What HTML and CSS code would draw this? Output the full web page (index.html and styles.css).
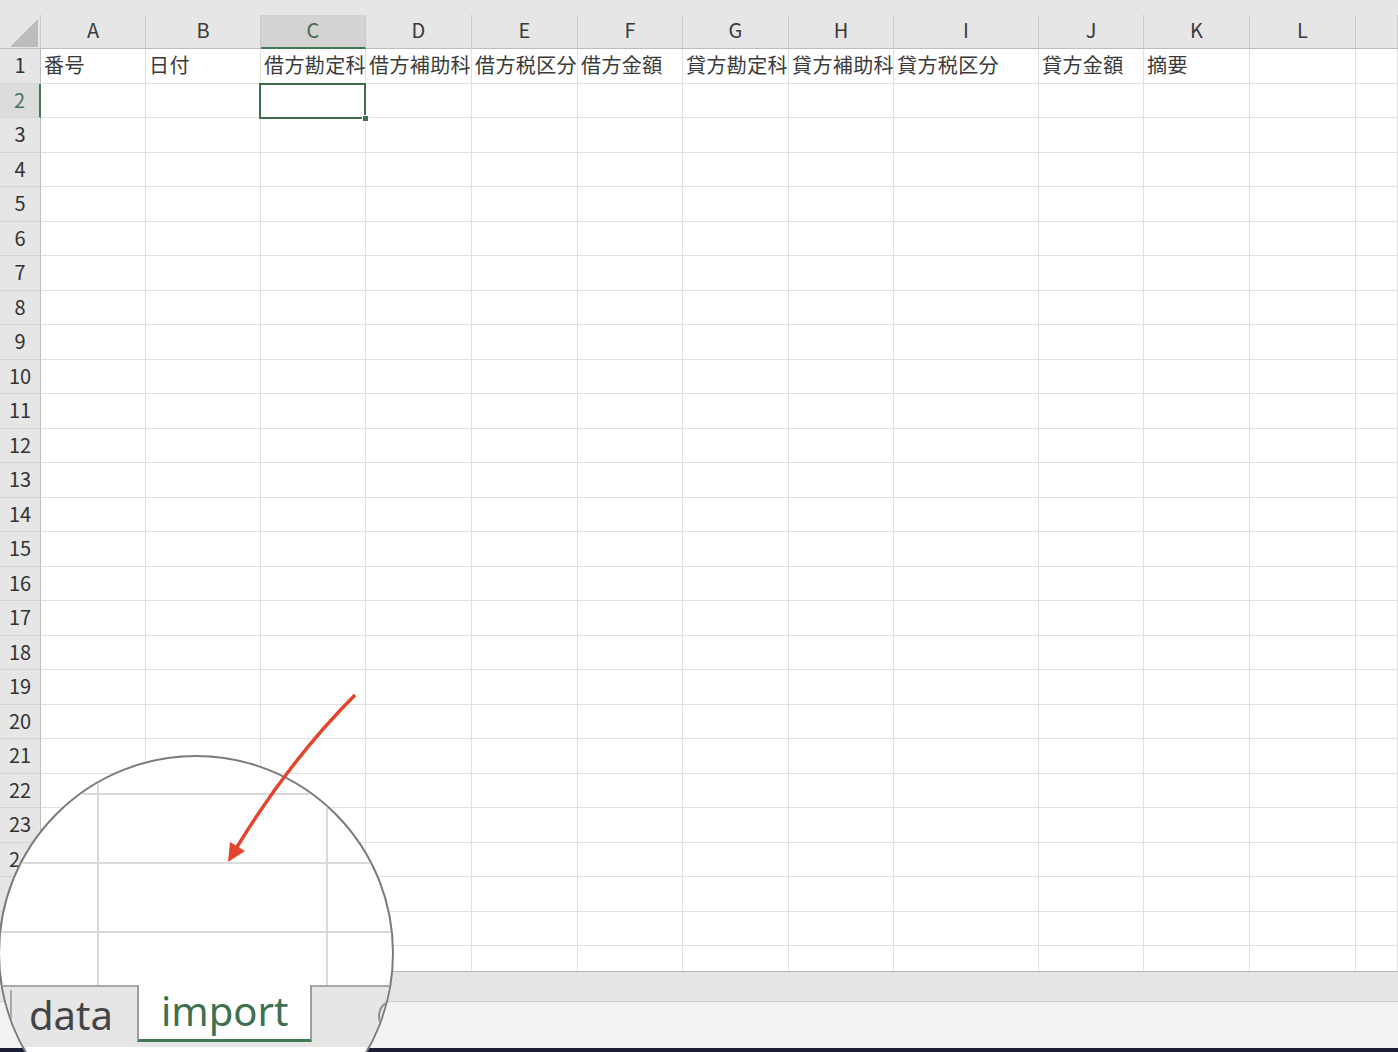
FILE: index.html
```html
<!DOCTYPE html>
<html lang="ja">
<head>
    <meta charset="UTF-8">
    <meta name="viewport" content="width=device-width, initial-scale=1.0">
    <title>import</title>
    <link rel="stylesheet" href="styles.css">
</head>
<body>
    <div class="page">
        <div class="top-strip"></div>
        <!-- 列見出し -->
        <div class="col-head">
            <div class="corner"><span class="tri"></span></div>
            <div class="ch">A</div>
            <div class="ch">B</div>
            <div class="ch on">C</div>
            <div class="ch">D</div>
            <div class="ch">E</div>
            <div class="ch">F</div>
            <div class="ch">G</div>
            <div class="ch">H</div>
            <div class="ch">I</div>
            <div class="ch">J</div>
            <div class="ch">K</div>
            <div class="ch">L</div>
            <div class="ch"></div>
        </div>
        <!-- セル -->
        <div class="cells" id="cells">
            <div class="rh">1</div>
            <div class="c txt">番号</div>
            <div class="c txt">日付</div>
            <div class="c txt">借方勘定科</div>
            <div class="c txt">借方補助科</div>
            <div class="c txt">借方税区分</div>
            <div class="c txt">借方金額</div>
            <div class="c txt">貸方勘定科</div>
            <div class="c txt">貸方補助科</div>
            <div class="c txt">貸方税区分</div>
            <div class="c txt">貸方金額</div>
            <div class="c txt">摘要</div>
            <div class="c txt"></div>
            <div class="c txt"></div>
        </div>
        <div class="sheet-bar"></div>
        <div class="status"></div>
        <div class="taskbar"></div>

        <!-- 拡大鏡 -->
        <div class="lens">
            <div class="lens-grid">
                <div></div><div></div><div></div>
                <div></div><div></div><div></div>
                <div></div><div></div><div></div>
                <div></div><div></div><div></div>
            </div>
            <div class="lens-tabs">
                <div class="tab">data</div>
                <div class="tab active">import</div>
                <div class="add"></div>
            </div>
        </div>

        <svg class="arrow" width="1398" height="1052" viewBox="0 0 1398 1052">
            <path d="M355 695 Q290 760 237 847" fill="none" stroke="#e2452c" stroke-width="3.5"/>
            <polygon points="228,862 230,842 245,851" fill="#e2452c"/>
        </svg>
    </div>
    <script>
        // 2行目から27行目まで作る
        var cells = document.getElementById('cells');
        for (var r = 2; r <= 27; r++) {
            var rh = document.createElement('div');
            rh.className = r == 2 ? 'rh on' : 'rh';
            rh.textContent = r;
            cells.appendChild(rh);
            for (var c = 0; c < 13; c++) {
                var d = document.createElement('div');
                d.className = (r == 2 && c == 2) ? 'c sel' : 'c';
                cells.appendChild(d);
            }
        }
    </script>
</body>
</html>
```

FILE: styles.css
```css
body {
    margin: 0;
    padding: 0;
    overflow: hidden;
    font-family: "Noto Sans CJK JP", "Noto Sans", sans-serif;
    color: #333;
}
.page {
    position: relative;
    width: 1398px;
    height: 1052px;
    overflow: hidden;
    display: flex;
    flex-direction: column;
    background-color: #fff;
}
.top-strip {
    height: 15px;
    background-color: #e6e6e6;
}
.col-head,
.cells {
    display: grid;
    grid-template-columns: 41px 105px 115px 105px 106px 106px 105px 106px 105px 145px 105px 106px 106px 1fr;
}
.col-head {
    height: 34px;
    background-color: #e6e6e6;
}
.corner,
.ch {
    box-sizing: border-box;
    border-right: 1px solid #c9c9c9;
    border-bottom: 1px solid #bdbdbd;
}
.tri {
    display: block;
    width: 0;
    height: 0;
    margin: 4px 0 0 10px;
    border-left: 28px solid transparent;
    border-bottom: 28px solid #bcbcbc;
}
.ch {
    text-align: center;
    font-size: 20px;
    line-height: 30px;
    color: #3a3a3a;
}
.ch.on {
    background-color: #d3d3d3;
    color: #3e6b4c;
    border-bottom: 2px solid #3f7a52;
}
.cells {
    height: 922px;
    overflow: hidden;
    grid-auto-rows: 34.5px;
}
.rh,
.c {
    box-sizing: border-box;
    border-bottom: 1px solid #e0e0e0;
    border-right: 1px solid #e0e0e0;
}
.rh {
    background-color: #e6e6e6;
    border-bottom-color: #d4d4d4;
    border-right-color: #bcbcbc;
    text-align: center;
    font-size: 20px;
    line-height: 31px;
    color: #333;
}
.rh.on {
    background-color: #dcdcdc;
    color: #4a7058;
    border-right: 2px solid #3f7a52;
}
.txt {
    padding-left: 3px;
    font-size: 20px;
    letter-spacing: 0.4px;
    line-height: 32px;
    white-space: nowrap;
    color: #3a3a3a;
}
.sel {
    position: relative;
    z-index: 2;
}
.sel::after {
    content: "";
    position: absolute;
    left: -2px;
    top: -1px;
    right: -1px;
    bottom: -2px;
    border: 2px solid #3e6e4b;
}
.sel::before {
    content: "";
    position: absolute;
    right: -4px;
    bottom: -5px;
    width: 5px;
    height: 5px;
    background-color: #3e6e4b;
    border: 1px solid #fff;
    z-index: 3;
}
.sheet-bar {
    height: 29px;
    background-color: #e5e5e5;
    border-top: 1px solid #b5b5b5;
    border-bottom: 1px solid #cdcdcd;
}
.status {
    height: 46px;
    background-color: #f3f2f1;
}
.taskbar {
    flex: 1;
    background-color: #1c1e35;
}

/* 拡大鏡 */
.lens {
    position: absolute;
    left: -2px;
    top: 755px;
    width: 396px;
    height: 396px;
    box-sizing: border-box;
    border: 2px solid #7b7b7b;
    border-radius: 50%;
    overflow: hidden;
    background-color: #fff;
    z-index: 5;
}
.lens-grid {
    display: grid;
    grid-template-columns: 99px 229px 1fr;
    grid-template-rows: 38px 69px 69px 52px;
}
.lens-grid div {
    box-sizing: border-box;
    border-right: 2px solid #dadada;
    border-bottom: 2px solid #dadada;
}
.lens-grid div:nth-child(3n) {
    border-right: none;
}
.lens-grid div:nth-child(n+10) {
    border-bottom: none;
}
.lens-tabs {
    display: flex;
    align-items: flex-start;
    height: 62px;
    padding-left: 10px;
    box-sizing: border-box;
    background-color: #e6e6e6;
    border-top: 2px solid #a8a8a8;
    font-family: "Noto Sans", sans-serif;
    font-size: 40px;
}
.tab,
.add {
    flex-shrink: 0;
}
.tab {
    box-sizing: border-box;
    height: 53px;
    line-height: 50px;
    border-left: 2px solid #a8a8a8;
}
.tab:first-child {
    width: 127px;
    padding-left: 17px;
    color: #444;
    margin-top: 3px;
    height: 50px;
}
.tab.active {
    width: 175px;
    margin-top: -2px;
    height: 57px;
    padding-left: 22px;
    background-color: #fff;
    color: #3e7050;
    border-left: 2px solid #9c9c9c;
    border-right: 2px solid #9c9c9c;
    border-bottom: 3px solid #3f7a52;
    line-height: 52px;
}
.add {
    width: 30px;
    height: 30px;
    margin: 12px 0 0 66px;
    border: 2px solid #8d8d8d;
    border-radius: 50%;
}
.arrow {
    position: absolute;
    left: 0;
    top: 0;
    z-index: 6;
    pointer-events: none;
}
```
